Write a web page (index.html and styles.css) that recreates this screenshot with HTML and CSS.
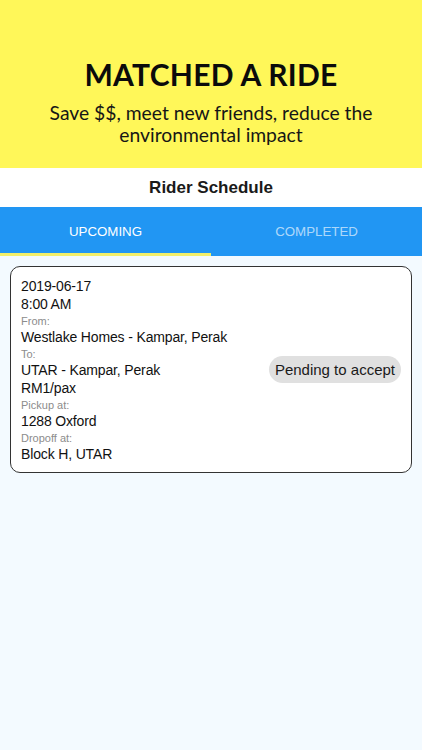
FILE: index.html
```html
<!DOCTYPE html>
<html>
<head>
<meta charset="utf-8">
<link rel="stylesheet" href="styles.css">
</head>
<body>
<div class="app">
  <header class="hero">
    <h1 class="hero-title">MATCHED A RIDE</h1>
    <p class="hero-sub">Save $$, meet new friends, reduce the environmental impact</p>
  </header>
  <div class="navbar">Rider Schedule</div>
  <div class="tabs">
    <div class="tab active">UPCOMING</div>
    <div class="tab">COMPLETED</div>
  </div>
  <main class="content">
    <div class="card">
      <div class="card-info">
        <div class="val">2019-06-17</div>
        <div class="val">8:00 AM</div>
        <div class="lbl">From:</div>
        <div class="val">Westlake Homes - Kampar, Perak</div>
        <div class="lbl">To:</div>
        <div class="val">UTAR - Kampar, Perak</div>
        <div class="val">RM1/pax</div>
        <div class="lbl">Pickup at:</div>
        <div class="val">1288 Oxford</div>
        <div class="lbl">Dropoff at:</div>
        <div class="val">Block H, UTAR</div>
      </div>
      <div class="badge">Pending to accept</div>
    </div>
  </main>
</div>
</body>
</html>
```
FILE: styles.css
```css
* { box-sizing: border-box; }
html, body { margin: 0; padding: 0; }
body {
  width: 422px;
  height: 750px;
  background: #f3faff;
  font-family: "Liberation Sans", Arial, sans-serif;
  color: #111;
}
.app { display: flex; flex-direction: column; height: 750px; }
.hero {
  background: #fff759;
  height: 168px;
  display: flex;
  flex-direction: column;
  align-items: center;
  padding-top: 56px;
  text-align: center;
}
.hero-title {
  margin: 0;
  font-family: Lato, sans-serif;
  font-weight: 700;
  font-size: 30px;
  line-height: 36px;
  letter-spacing: 0.3px;
  color: #0b0b0b;
}
.hero-sub {
  margin: 10px 0 0;
  font-family: Lato, sans-serif;
  font-size: 19.3px;
  line-height: 22px;
  color: #161616;
  width: 340px;
}
.navbar {
  background: #fff;
  height: 39px;
  display: flex;
  align-items: center;
  justify-content: center;
  font-size: 17px;
  font-weight: 700;
  color: #1a1a1a;
}
.tabs {
  display: flex;
  background: #2196f3;
  height: 49px;
}
.tab {
  flex: 1;
  display: flex;
  align-items: center;
  justify-content: center;
  font-size: 13.3px;
  color: rgba(255,255,255,0.65);
  border-bottom: 3px solid transparent;
  padding-top: 3px;
}
.tab.active {
  color: #fff;
  border-bottom-color: #f2ef6a;
}
.content { flex: 1; padding: 10px 10px; }
.card {
  background: #fff;
  border: 1.3px solid #333;
  border-radius: 10px;
  padding: 10px 10px 9px 10px;
  display: flex;
  align-items: center;
  justify-content: space-between;
}
.card-info { display: flex; flex-direction: column; }
.val { font-size: 14px; line-height: 18px; letter-spacing: -0.15px; color: #111; }
.lbl { font-size: 11px; line-height: 15px; padding-top: 1px; margin-bottom: -1px; color: #8c8c8c; }
.badge {
  background: #e0e0e0;
  border-radius: 14px;
  font-size: 15px;
  line-height: 27px;
  padding: 0 6px;
  color: #1a1a1a;
  margin-top: -2px;
}
```
